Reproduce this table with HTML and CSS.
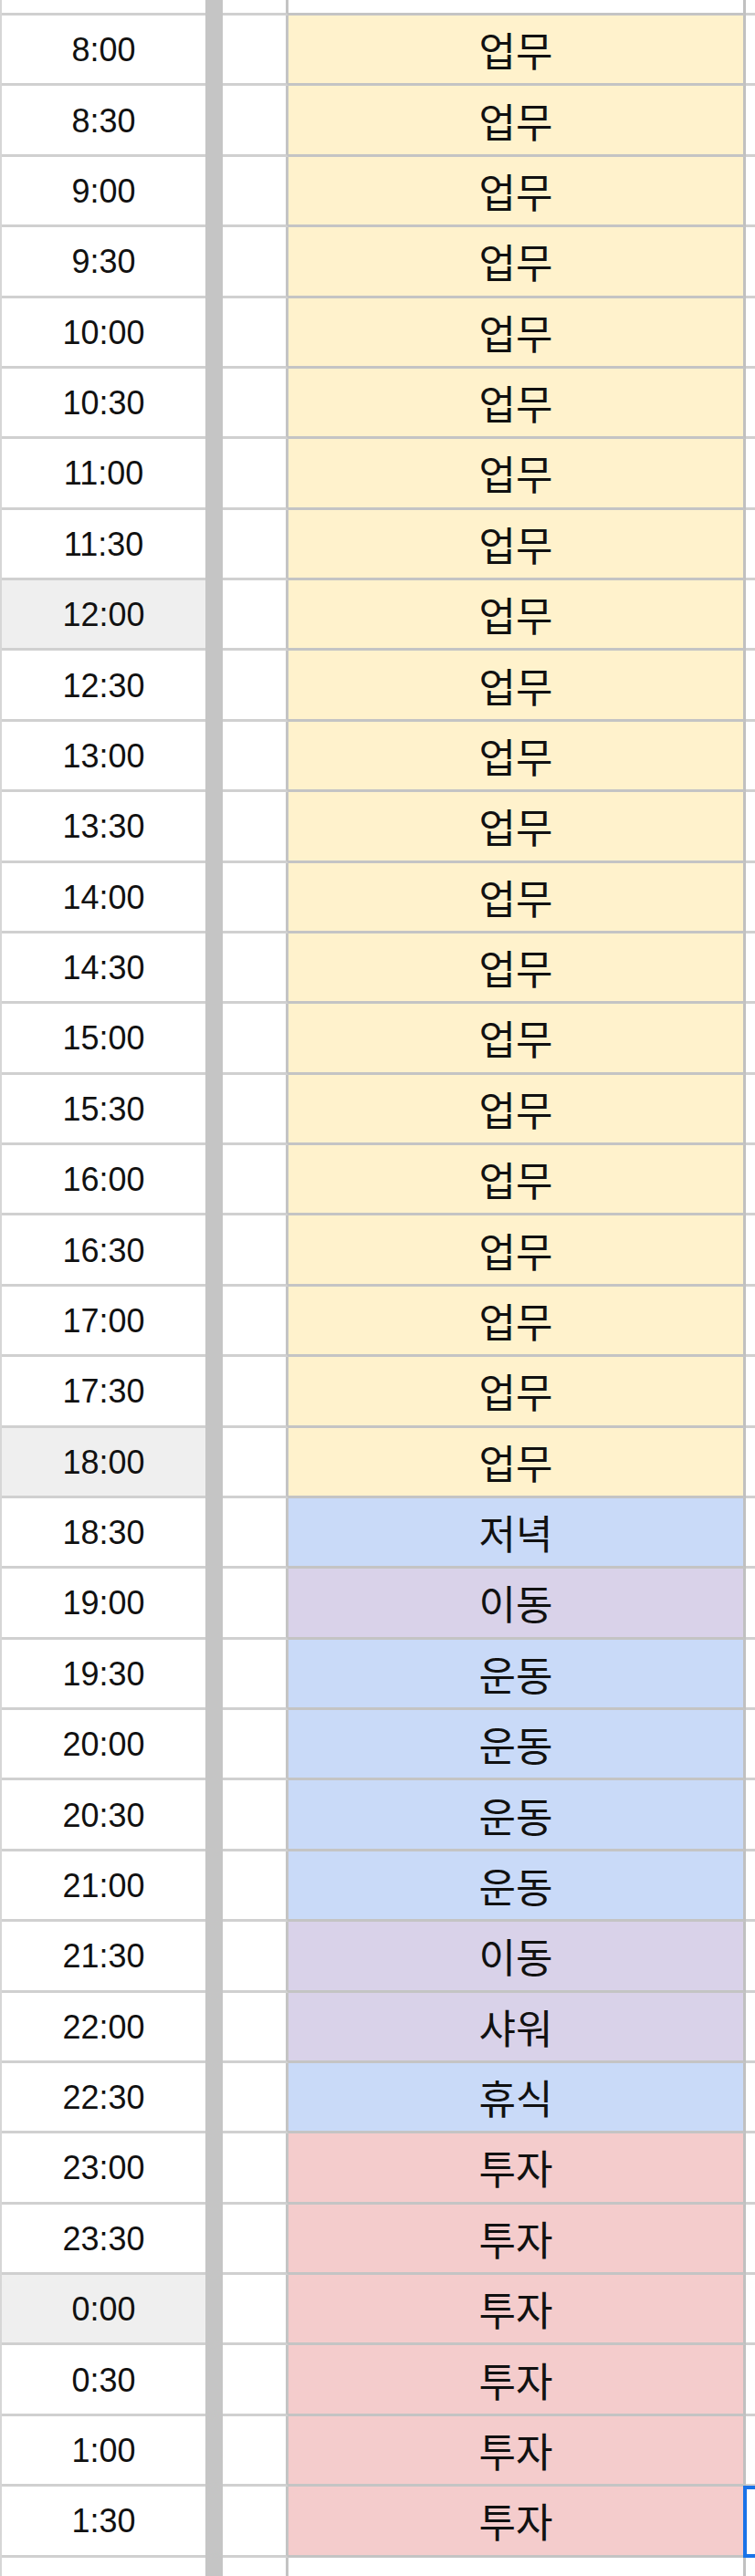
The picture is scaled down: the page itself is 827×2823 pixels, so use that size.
FILE: index.html
```html
<!DOCTYPE html>
<html lang="ko">
<head>
<meta charset="UTF-8">
<meta name="viewport" content="width=device-width, initial-scale=1.0">
<title>하루 일정표</title>
<link rel="stylesheet" href="styles.css">
</head>
<body>
<div class="sheet" id="sheet">
    <div class="row edge-top">
        <div class="cell time"></div>
        <div class="cell bar"></div>
        <div class="cell blank"></div>
        <div class="cell task"></div>
        <div class="cell rest"></div>
    </div>
</div>

<script>
document.addEventListener("DOMContentLoaded", function () {
    const sheet = document.getElementById("sheet");

    // time, task, colour, highlighted time cell
    const schedule = [
        ["8:00", "업무", "work"], ["8:30", "업무", "work"],
        ["9:00", "업무", "work"], ["9:30", "업무", "work"],
        ["10:00", "업무", "work"], ["10:30", "업무", "work"],
        ["11:00", "업무", "work"], ["11:30", "업무", "work"],
        ["12:00", "업무", "work", true], ["12:30", "업무", "work"],
        ["13:00", "업무", "work"], ["13:30", "업무", "work"],
        ["14:00", "업무", "work"], ["14:30", "업무", "work"],
        ["15:00", "업무", "work"], ["15:30", "업무", "work"],
        ["16:00", "업무", "work"], ["16:30", "업무", "work"],
        ["17:00", "업무", "work"], ["17:30", "업무", "work"],
        ["18:00", "업무", "work", true],
        ["18:30", "저녁", "rest-blue"],
        ["19:00", "이동", "move"],
        ["19:30", "운동", "rest-blue"], ["20:00", "운동", "rest-blue"],
        ["20:30", "운동", "rest-blue"], ["21:00", "운동", "rest-blue"],
        ["21:30", "이동", "move"],
        ["22:00", "샤워", "move"],
        ["22:30", "휴식", "rest-blue"],
        ["23:00", "투자", "invest"], ["23:30", "투자", "invest"],
        ["0:00", "투자", "invest", true], ["0:30", "투자", "invest"],
        ["1:00", "투자", "invest"], ["1:30", "투자", "invest"]
    ];

    schedule.forEach((item, i) => {
        const row = document.createElement("div");
        row.className = "row";
        const last = i === schedule.length - 1;
        row.innerHTML = `
            <div class="cell time${item[3] ? " marked" : ""}">${item[0]}</div>
            <div class="cell bar"></div>
            <div class="cell blank"></div>
            <div class="cell task ${item[2]}">${item[1]}</div>
            <div class="cell rest${last ? " selected" : ""}"></div>
        `;
        sheet.appendChild(row);
    });

    // empty row below the table
    const bottom = document.createElement("div");
    bottom.className = "row edge-bottom";
    bottom.innerHTML = `
        <div class="cell time"></div>
        <div class="cell bar"></div>
        <div class="cell blank"></div>
        <div class="cell task"></div>
        <div class="cell rest"></div>
    `;
    sheet.appendChild(bottom);
});
</script>
</body>
</html>
```

FILE: styles.css
```css
body {
    margin: 0;
    padding: 0;
    background-color: #fff;
    font-family: "Liberation Sans", "Noto Sans CJK KR", sans-serif;
    color: #111;
}

.sheet {
    width: 827px;
    height: 2823px;
    overflow: hidden;
    border-left: 2px solid #d6d6d6;
    box-sizing: border-box;
}

.row {
    display: flex;
    height: 77.39px;
    box-sizing: border-box;
}

.edge-top {
    height: 17px;
}

.edge-bottom {
    height: 30px;
}

.cell {
    box-sizing: border-box;
    border-bottom: 3px solid #d0d0d0;
    display: flex;
    align-items: center;
    justify-content: center;
}

.edge-bottom .cell {
    border-bottom: none;
}

.time {
    width: 223px;
    font-size: 36px;
    padding-top: 2px;
}

.time.marked {
    background-color: #efefef;
}

.bar {
    width: 19px;
    background-color: #c5c5c5;
    border-bottom: none;
}

.blank {
    width: 72px;
    border-right: 3px solid #c4c4c4;
}

.task {
    width: 501px;
    border-right: 3px solid #c0c0c0;
    border-bottom-color: #c4c4c4;
    font-family: "Noto Sans CJK KR", sans-serif;
    font-size: 44px;
}

.rest {
    flex: 1;
    position: relative;
}

.selected::after {
    content: "";
    position: absolute;
    left: -3px;
    top: -1px;
    right: -4px;
    bottom: -3px;
    border: 4px solid #1a73e8;
}

.work {
    background-color: #fff2cc;
}

.rest-blue {
    background-color: #c9daf8;
}

.move {
    background-color: #d9d2e9;
}

.invest {
    background-color: #f4cccc;
}
```
